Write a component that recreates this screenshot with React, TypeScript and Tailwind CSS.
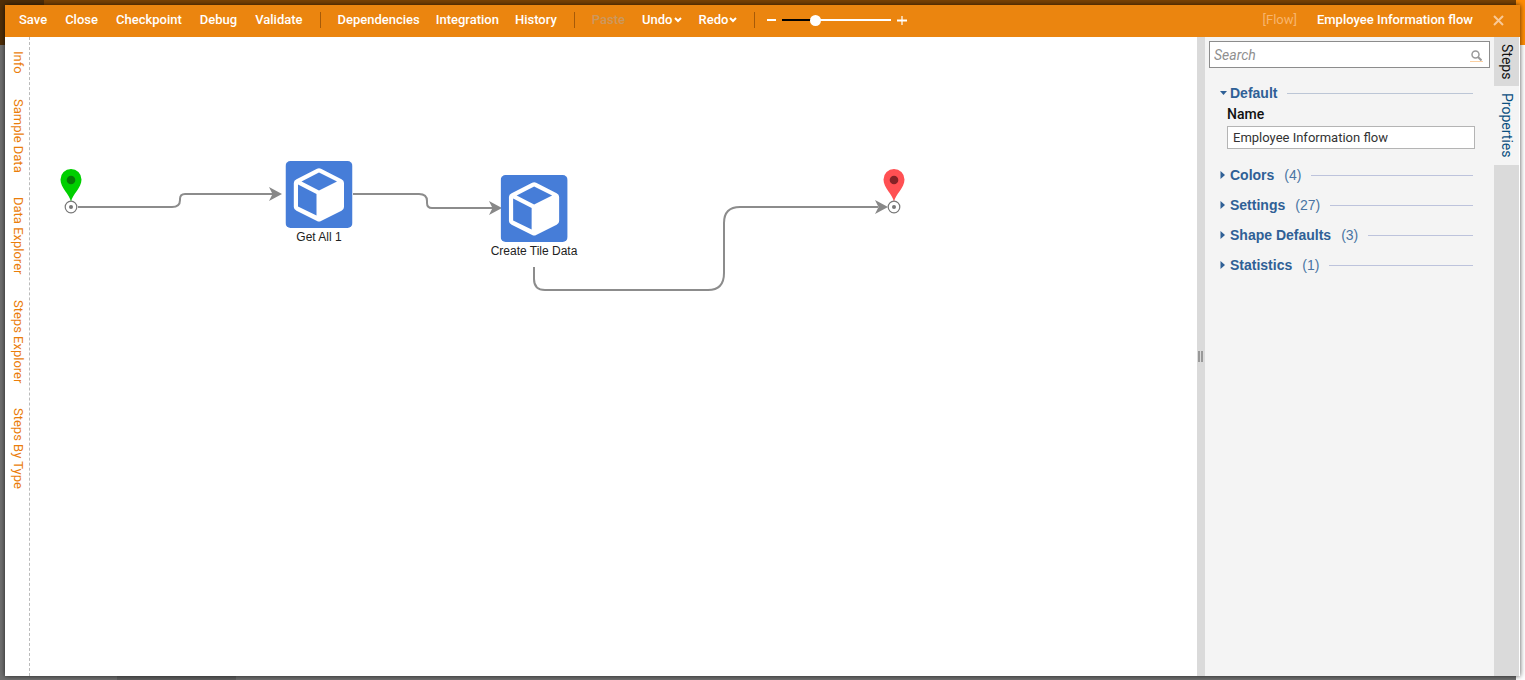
import React, { useState } from 'react';

interface FlowNode {
  id: string;
  label: string;
  x: number;
  y: number;
}

interface Group {
  name: string;
  count: number;
}

const fileMenu = ['Save', 'Close', 'Checkpoint', 'Debug', 'Validate'];
const viewMenu = ['Dependencies', 'Integration', 'History'];
const leftTabs = ['Info', 'Sample Data', 'Data Explorer', 'Steps Explorer', 'Steps By Type'];

const nodes: FlowNode[] = [
  { id: 'get-all', label: 'Get All 1', x: 289, y: 124 },
  { id: 'tile-data', label: 'Create Tile Data', x: 504, y: 138 },
];

const groups: Group[] = [
  { name: 'Colors', count: 4 },
  { name: 'Settings', count: 27 },
  { name: 'Shape Defaults', count: 3 },
  { name: 'Statistics', count: 1 },
];

const Separator = () => <div className="h-4 w-px bg-[#a65a08]" />;

const Caret = () => (
  <svg width="8" height="6" viewBox="0 0 8 6" fill="none" stroke="currentColor" strokeWidth="2">
    <path d="M1 1 L4 4 L7 1" />
  </svg>
);

const CubeIcon = () => (
  <svg width="67" height="67" viewBox="0 0 67 67" className="block">
    <rect width="67" height="67" rx="5" fill="#467dd8" />
    <path
      d="M31.5 7.7 Q33.5 6.7 35.5 7.7 L56 18.2 Q58.500 19.500 58.500 22 V46 Q58.500 48.500 56 49.800 L35.500 60 Q33.500 61 31.500 60 L11 49.800 Q8.300 48.500 8.300 46 V22 Q8.300 19.500 11 18.200 Z"
      fill="#fff"
    />
    <path d="M33.5 11.500 L51.500 20.500 L33.500 29.500 L16 20.500 Z" fill="#467dd8" />
    <path d="M12.500 23.500 L31 33 V54.500 L12.500 45.500 Z" fill="#467dd8" />
  </svg>
);

interface PinProps {
  x: number;
  y: number;
  fill: string;
  dot: string;
}

const Pin: React.FC<PinProps> = ({ x, y, fill, dot }) => (
  <g transform={`translate(${x} ${y})`}>
    <path d="M0 -5 C-1.500 -13 -10.500 -19 -10.500 -27.500 A10.500 10.500 0 0 1 10.500 -27.500 C10.500 -19 1.500 -13 0 -5 Z" fill={fill} />
    <circle cx="0" cy="-27" r="4.300" fill={dot} />
    <circle cx="0" cy="0" r="5.800" fill="#fff" stroke="#777" strokeWidth="1.200" />
    <circle cx="0" cy="0" r="2" fill="#777" />
  </g>
);

const Arrow: React.FC<{ x: number; y: number }> = ({ x, y }) => (
  <path d={`M${x} ${y} l-13 -7 l3.500 7 l-3.500 7 Z`} fill="#888" />
);

const Canvas = () => (
  <main className="relative min-w-0 flex-1 overflow-hidden bg-white">
    <svg className="absolute inset-0 h-full w-full">
      <g fill="none" stroke="#8c8c8c" strokeWidth="2">
        <path d="M48 170 H142 Q150 170 150 163 V162 Q150 157 155 157 H243" />
        <path d="M323 157 H389 Q397 157 397 164 V166 Q397 171 402 171 H463" />
        <path d="M504 230 V242 Q504 253 515 253 H678 Q694 253 694 236 V186 Q694 170 710 170 H848" />
      </g>
      <Arrow x={252} y={157} />
      <Arrow x={472} y={171} />
      <Arrow x={858} y={170} />
      <Pin x={41} y={170} fill="#00cf00" dot="#087808" />
      <Pin x={864} y={170} fill="#ff5053" dot="#842226" />
    </svg>
    {nodes.map(n => (
      <div
        key={n.id}
        className="absolute flex -translate-x-1/2 flex-col items-center whitespace-nowrap"
        style={{ left: n.x, top: n.y }}
      >
        <CubeIcon />
        <span className="mt-px font-['Liberation_Sans',sans-serif] text-[12px] leading-4 text-[#222]">{n.label}</span>
      </div>
    ))}
  </main>
);

const PropertiesPanel = () => {
  const [flowName, setFlowName] = useState('Employee Information flow');

  return (
    <aside className="flex w-[289px] shrink-0 flex-col bg-[#f4f4f4] px-1 pt-1">
      <div className="flex h-[27px] items-center border border-[#8c8c8c] bg-white px-1">
        <input
          type="text"
          aria-label="Search"
          placeholder="Search"
          className="min-w-0 flex-1 text-sm italic outline-none placeholder:text-[#8f8f8f]"
        />
        <button aria-label="Run search" className="mr-0.5 mt-0.5 border-b border-[#fbd0a2] px-px text-[#999]">
          <svg width="11" height="11" viewBox="0 0 11 11" fill="none" stroke="currentColor" className="block">
            <circle cx="4.500" cy="4.500" r="3.500" strokeWidth="1.500" />
            <path d="M7 7 L10.500 10.500" strokeWidth="2" />
          </svg>
        </button>
      </div>

      <div className="mt-4 pl-[11px] pr-[17px]">
        <button className="flex h-[18px] w-full items-center text-[#2f6096]">
          <svg width="7" height="4" className="mr-[3px]"><path d="M0 0 H7 L3.500 4 Z" fill="currentColor" /></svg>
          <span className="font-['Liberation_Sans',sans-serif] text-sm font-bold">Default</span>
          <span className="ml-2.5 h-px flex-1 bg-[#bcc6d6]" />
        </button>
        <div className="-mr-0.5 pl-[7px]">
          <label htmlFor="flow-name" className="mt-0.5 block text-sm font-medium leading-5 text-[#111]">Name</label>
          <input
            id="flow-name"
            type="text"
            value={flowName}
            onChange={e => setFlowName(e.target.value)}
            className="mt-0.5 block h-[23px] w-full border border-[#b4b4b4] bg-white px-[5px] text-[13px] text-[#333] outline-none"
          />
        </div>

        <div className="mt-4 flex flex-col gap-[10px]">
          {groups.map(g => (
            <button key={g.name} className="flex h-5 items-center text-sm text-[#2f6096]">
              <svg width="5" height="8" className="mr-[5px]"><path d="M0.500 0 L5 4 L0.500 8 Z" fill="currentColor" /></svg>
              <span className="font-['Liberation_Sans',sans-serif] font-bold">{g.name}</span>
              <span className="ml-2.5 font-['Liberation_Sans',sans-serif] text-[#4a74a3]">({g.count})</span>
              <span className="ml-2.5 h-px flex-1 bg-[#bdc3dc]" />
            </button>
          ))}
        </div>
      </div>
    </aside>
  );
};

const App: React.FC = () => {
  const [zoom, setZoom] = useState(28);

  return (
    <div className="relative flex h-screen overflow-hidden bg-[#707070] px-[5px] pb-1 pt-[5px] font-[Roboto,sans-serif]">
      {/* dimmed page behind the designer window */}
      <div className="absolute inset-x-0 top-0 h-[45px] bg-[#7a4204]" />
      <div className="absolute left-0 top-0 h-[45px] w-11 bg-[#4f2e08]" />
      <div className="absolute bottom-0 left-[117px] h-1 w-[119px] bg-[#606060]" />
      <div className="absolute bottom-0 right-0 top-0 w-[9px] bg-white" />
      <div className="absolute right-0 top-0 h-[45px] w-[9px] bg-[#ff8c05]" />

      <div className="relative flex min-w-0 flex-1 flex-col shadow-[0_0_5px_rgba(0,0,0,0.7)]">
        <header className="flex h-8 shrink-0 items-center bg-[#eb850f] pb-0.5 text-[13px] font-medium text-white">
          <nav className="flex items-center gap-[17px] pl-3.5">
            <div className="flex gap-[18px]">
              {fileMenu.map(m => <button key={m}>{m}</button>)}
            </div>
            <Separator />
            <div className="flex gap-4">
              {viewMenu.map(m => <button key={m}>{m}</button>)}
            </div>
            <Separator />
            <button disabled className="text-[#cb985f]">Paste</button>
            <button className="flex items-center gap-px">Undo<Caret /></button>
            <button className="flex items-center gap-px">Redo<Caret /></button>
            <Separator />
          </nav>
          <div className="ml-3 flex items-center gap-1.5">
            <button aria-label="Zoom out" className="flex h-[9px] w-[9px] items-center"><span className="h-0.5 w-full bg-white" /></button>
            <input
              type="range"
              min={0}
              max={100}
              value={zoom}
              aria-label="Zoom"
              onChange={e => setZoom(Number(e.target.value))}
              className="h-0.5 w-[109px] appearance-none [&::-webkit-slider-thumb]:size-[11px] [&::-webkit-slider-thumb]:appearance-none [&::-webkit-slider-thumb]:rounded-full [&::-webkit-slider-thumb]:bg-white"
              style={{ background: `linear-gradient(to right, #000 ${zoom}%, #fff ${zoom}%)` }}
            />
            <button aria-label="Zoom in">
              <svg width="10" height="9" className="block"><path d="M0 4.500 H10" stroke="#fff" strokeWidth="2" /><path d="M5 0 V9" stroke="#fff" strokeWidth="1.200" /></svg>
            </button>
          </div>
          <div className="ml-auto flex items-center pr-4">
            <span className="mr-5 font-normal text-[#f7b56e]">[Flow]</span>
            <span>Employee Information flow</span>
            <button aria-label="Close window" className="ml-5 text-[#f9c997]">
              <svg width="11" height="11" viewBox="0 0 11 11" stroke="currentColor" strokeWidth="2" className="block"><path d="M1 1 L10 10 M10 1 L1 10" /></svg>
            </button>
          </div>
        </header>

        <div className="flex min-h-0 flex-1">
          <nav className="flex w-[25px] shrink-0 flex-col items-center gap-[25px] border-r border-dashed border-[#bbb] bg-white pl-0.5 pt-3.5 text-[13px] leading-4 text-[#ea7d0a]">
            {leftTabs.map(t => <button key={t} className="[writing-mode:vertical-rl]">{t}</button>)}
          </nav>

          <Canvas />

          <div className="flex w-2 shrink-0 items-center justify-start gap-px bg-[#dadada] pl-px">
            <div className="h-[11px] w-0.5 bg-[#999]" />
            <div className="h-[11px] w-0.5 bg-[#999]" />
          </div>

          <PropertiesPanel />

          {/* vertical writing mode: px is the padding along the text */}
          <nav className="flex w-[26px] shrink-0 flex-col items-start border-r border-white bg-[#dadada] text-sm leading-5">
            <button className="w-full px-[7px] py-0.5 text-[#111] [writing-mode:vertical-rl]">Steps</button>
            <button className="w-full bg-[#f4f4f4] px-[7px] py-0.5 text-[#0b4f7f] [writing-mode:vertical-rl]">Properties</button>
          </nav>
        </div>
      </div>
    </div>
  );
};

export default App;
